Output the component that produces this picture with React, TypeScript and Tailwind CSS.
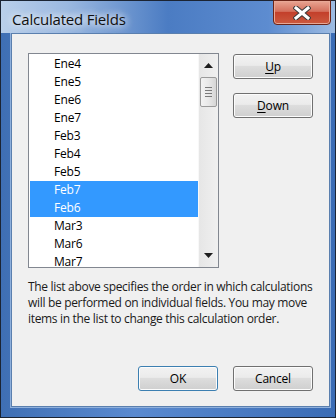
const items = ["Ene4", "Ene5", "Ene6", "Ene7", "Feb3", "Feb4", "Feb5", "Feb7", "Feb6", "Mar3", "Mar6", "Mar7"];
const selected = new Set(["Feb7", "Feb6"]);

const font = { fontFamily: '"Open Sans", "Noto Sans", sans-serif' };

const DlgButton = ({ children, primary = false }: { children: React.ReactNode; primary?: boolean }) => (
  <button
    className={`flex h-[25px] w-[80px] items-center justify-center rounded-[3px] border bg-[linear-gradient(#f2f2f2_0%,#ebebeb_45%,#dddddd_50%,#cfcfcf_100%)] text-[12px] tracking-[-0.2px] text-black shadow-[inset_0_0_0_1px_#fcfcfc] ${
      primary ? "border-[#3c7fb1] shadow-[inset_0_0_0_1px_#48d5fb]" : "border-[#707070]"
    }`}
  >
    {children}
  </button>
);

export default function App() {
  return (
    <div
      className="flex h-[418px] w-[336px] flex-col border border-[#1b2433] bg-[linear-gradient(90deg,#3f6fb4_0%,#5a8ad0_40%,#3a6cb5_100%)]"
      style={font}
    >
      {/* title bar */}
      <div className="relative h-[32px] shrink-0 bg-[linear-gradient(90deg,#b9cfea_0%,#9ab8e0_20%,#4b7cc3_50%,#5d8cd0_80%,#9dbbe2_100%)]">
        <span className="absolute left-[11px] top-[7px] text-[15px] tracking-[-0.2px] text-[#101010] [text-shadow:0_0_8px_#ffffff,0_0_8px_#ffffff]">
          Calculated Fields
        </span>
        <div className="absolute right-[4px] top-[-1px] flex h-[25px] w-[58px] items-center justify-center rounded-b-[4px] border border-[#6b2418] bg-[linear-gradient(#e9a593_0%,#d4705d_45%,#c3402b_50%,#cc5a3f_100%)] shadow-[inset_0_0_0_1px_#e8a896]">
          <svg width="18" height="14" viewBox="0 0 18 14">
            <path d="M3 2 L15 12 M15 2 L3 12" stroke="#3a3a3a" strokeWidth="5" strokeLinecap="square" />
            <path d="M3 2 L15 12 M15 2 L3 12" stroke="#ffffff" strokeWidth="3" strokeLinecap="square" />
          </svg>
        </div>
      </div>

      {/* client area */}
      <div className="ml-[9px] mr-[4px] border border-t-0 border-[#8fb0dc]">
        <div className="flex h-[374px] flex-col border border-[#5a7fae] bg-[#f0f0f0] pl-[16px] pr-[16px] pt-[19px]">
          <div className="flex gap-[14px]">
            <div className="flex h-[215px] w-[191px] border border-[#828790] bg-white">
              <div className="flex-1 overflow-hidden pl-px pt-px">
                {items.map((item) => (
                  <div
                    key={item}
                    className={`flex h-[18px] items-center pl-[24px] text-[12px] leading-none tracking-[-0.2px] ${
                      selected.has(item) ? "bg-[#3399ff] text-white" : "text-black"
                    }`}
                  >
                    {item}
                  </div>
                ))}
              </div>
              <div className="relative w-[20px] border-l border-[#f8f8f8] bg-[linear-gradient(90deg,#e6e6e6,#f0f0f0)]">
                <svg className="absolute left-[5px] top-[9px]" width="9" height="5" viewBox="0 0 9 5">
                  <path d="M4.5 0 L9 5 L0 5 Z" fill="#1e1e1e" />
                </svg>
                <div className="absolute left-[1px] top-[23px] flex h-[30px] w-[17px] flex-col items-center justify-center gap-[2px] rounded-[2px] border border-[#9a9a9a] bg-[linear-gradient(90deg,#f3f3f3,#e8e8e8_50%,#d6d6d6)]">
                  <div className="h-px w-[7px] bg-[#7a7a7a]" />
                  <div className="h-px w-[7px] bg-[#7a7a7a]" />
                  <div className="h-px w-[7px] bg-[#7a7a7a]" />
                  <div className="h-px w-[7px] bg-[#7a7a7a]" />
                </div>
                <svg className="absolute bottom-[9px] left-[5px]" width="9" height="5" viewBox="0 0 9 5">
                  <path d="M0 0 L9 0 L4.5 5 Z" fill="#1e1e1e" />
                </svg>
              </div>
            </div>
            <div className="flex flex-col gap-[14px] pt-px">
              <DlgButton>
                <span className="underline underline-offset-2">U</span>p
              </DlgButton>
              <DlgButton>
                <span className="underline underline-offset-2">D</span>own
              </DlgButton>
            </div>
          </div>

          <p className="mt-[11px] whitespace-nowrap text-[12px] leading-[16px] tracking-[-0.32px] text-[#1a1a1a]">
            The list above specifies the order in which calculations
            <br />
            will be performed on individual fields. You may move
            <br />
            items in the list to change this calculation order.
          </p>

          <div className="mb-[15px] mt-auto flex justify-end gap-[15px]">
            <DlgButton primary>OK</DlgButton>
            <DlgButton>Cancel</DlgButton>
          </div>
        </div>
      </div>
    </div>
  );
}
